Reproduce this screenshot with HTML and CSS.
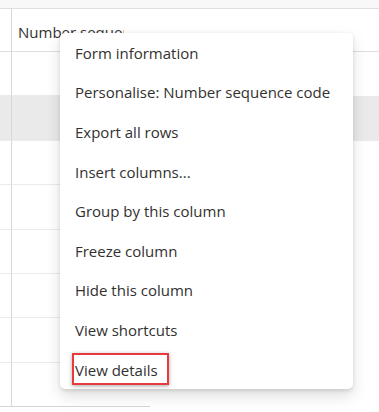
FILE: index.html
```html
<!DOCTYPE html>
<html lang="en">
<head>
  <meta charset="UTF-8" />
  <meta name="viewport" content="width=device-width, initial-scale=1.0"/>
  <title>Number sequences</title>
  <link rel="stylesheet" href="styles.css">
</head>
<body>
  <div class="page">
    <div class="toolbar"></div>

    <div class="grid">
      <div class="grid-row header-row">
        <div class="cell check-cell"></div>
        <div class="cell head-cell"><span class="head-label">Number sequence code</span></div>
      </div>
      <div class="grid-row"><div class="cell check-cell"></div><div class="cell"></div><div class="cell tail"></div></div>
      <div class="grid-row selected"><div class="cell check-cell"></div><div class="cell"></div><div class="cell tail"></div></div>
      <div class="grid-row"><div class="cell check-cell"></div><div class="cell"></div><div class="cell tail"></div></div>
      <div class="grid-row"><div class="cell check-cell"></div><div class="cell"></div><div class="cell tail"></div></div>
      <div class="grid-row"><div class="cell check-cell"></div><div class="cell"></div><div class="cell tail"></div></div>
      <div class="grid-row"><div class="cell check-cell"></div><div class="cell"></div><div class="cell tail"></div></div>
      <div class="grid-row"><div class="cell check-cell"></div><div class="cell"></div><div class="cell tail"></div></div>
      <div class="grid-row last"><div class="cell check-cell"></div><div class="cell"></div><div class="cell tail"></div></div>
    </div>

    <ul class="context-menu">
      <li class="menu-item">Form information</li>
      <li class="menu-item">Personalise: Number sequence code</li>
      <li class="menu-item">Export all rows</li>
      <li class="menu-item">Insert columns...</li>
      <li class="menu-item">Group by this column</li>
      <li class="menu-item">Freeze column</li>
      <li class="menu-item">Hide this column</li>
      <li class="menu-item">View shortcuts</li>
      <li class="menu-item highlighted">View details<span class="callout"></span></li>
    </ul>
  </div>
</body>
</html>
```

FILE: styles.css
```css
body {
  margin: 0;
  background: white;
  font-family: 'Open Sans', 'Noto Sans', sans-serif;
  color: #323130;
}

.page {
  position: relative;
  width: 379px;
  height: 412px;
  overflow: hidden;
}

.toolbar {
  height: 8px;
  background: #f8f8f8;
  border-bottom: 1px solid #e1dfdd;
}

.grid-row {
  display: grid;
  grid-template-columns: 12px 138px 1fr;
  height: 44.4px;
  box-sizing: border-box;
}

.cell {
  border-bottom: 1px solid #ebebeb;
}

.cell.tail {
  border-bottom: none;
}

.check-cell {
  border-right: 1px solid #d8d8d8;
}

.header-row {
  grid-template-columns: 12px 1fr;
  height: 43px;
  border-bottom: 1px solid #e1dfdd;
}

.header-row .cell {
  border-bottom: none;
}

.head-cell {
  padding: 13px 0 0 6px;
  font-size: 15px;
  white-space: nowrap;
}

.head-label {
  display: inline-block;
  width: 106px;
  overflow: hidden;
  vertical-align: top;
}

.selected {
  background: #eaeaea;
}

.last .cell {
  border-bottom-color: #d6d6d6;
}

.context-menu {
  position: absolute;
  left: 60px;
  top: 33px;
  width: 293px;
  margin: 0;
  padding: 0;
  list-style: none;
  background: white;
  border-radius: 5px;
  box-shadow: 0 6.4px 14.4px rgba(0, 0, 0, 0.13), 0 1.2px 3.6px rgba(0, 0, 0, 0.11);
}

.menu-item {
  position: relative;
  height: 39.6px;
  display: flex;
  align-items: center;
  padding-left: 15px;
  font-size: 15px;
  white-space: nowrap;
}

.callout {
  position: absolute;
  left: 12px;
  top: 3px;
  width: 97px;
  height: 32px;
  box-sizing: border-box;
  border: 2px solid #e8393d;
  box-shadow: 0 1px 4px rgba(0, 0, 0, 0.35);
}
```
